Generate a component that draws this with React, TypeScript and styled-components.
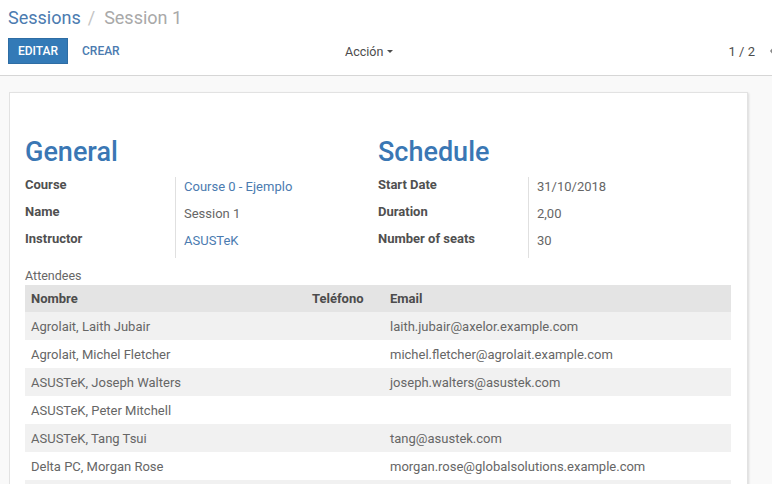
import React from "react";
import styled, { createGlobalStyle } from "styled-components";

const GlobalStyle = createGlobalStyle`
  html, body { margin: 0; padding: 0; }
  body {
    font-family: Roboto, "Noto Sans", "Liberation Sans", sans-serif;
    background: #f9f9f9;
    overflow: hidden;
    width: 772px;
    height: 484px;
    color: #4c4c4c;
  }
`;

const Page = styled.div`
  width: 772px;
  height: 484px;
  overflow: hidden;
  display: flex;
  flex-direction: column;
`;

const ControlPanel = styled.div`
  background: #fff;
  border-bottom: 1px solid #d6d6d6;
  padding: 7px 0 11px 8px;
`;

const Breadcrumb = styled.div`
  font-size: 18px;
  line-height: 22px;
  white-space: nowrap;
`;

const Crumb = styled.span<{ $active?: boolean }>`
  color: ${(p) => (p.$active ? "#a9a9a9" : "#4b7bb0")};
`;

const Sep = styled.span`
  color: #c4c4c4;
  margin: 0 9px 0 7px;
`;

const Toolbar = styled.div`
  margin-top: 9px;
  display: flex;
  align-items: center;
  height: 26px;
  white-space: nowrap;
`;

const LeftButtons = styled.div`
  display: flex;
  align-items: center;
  width: 337px;
  flex: none;
`;

const PrimaryButton = styled.button`
  height: 26px;
  width: 60px;
  padding: 0;
  background: #337ab7;
  border: 1px solid #2e6da4;
  color: #fff;
  font: 500 12px Roboto, "Liberation Sans", sans-serif;
  border-radius: 0;
`;

const LinkButton = styled.button`
  height: 26px;
  padding: 0 0 0 14px;
  background: transparent;
  border: none;
  color: #4b7bb0;
  font: 500 12px Roboto, "Liberation Sans", sans-serif;
`;

const Dropdown = styled.div`
  font-size: 12.5px;
  color: #4c4c4c;
  display: flex;
  align-items: center;
  gap: 4px;
`;

const Caret = styled.span`
  width: 0;
  height: 0;
  border-left: 3.5px solid transparent;
  border-right: 3.5px solid transparent;
  border-top: 3.5px solid #4c4c4c;
`;

const Pager = styled.div`
  margin-left: auto;
  margin-right: -5px;
  display: flex;
  align-items: center;
  font-size: 13px;
  color: #4c4c4c;
  flex: none;
`;

const PagerArrows = styled.div`
  display: flex;
  align-items: center;
  margin-left: 14px;
  color: #666;
  width: 8px;
  overflow: visible;
`;

const Content = styled.div`
  flex: 1;
  padding: 16px 24px 0 9px;
  overflow: hidden;
`;

const Sheet = styled.div`
  background: #fff;
  border: 1px solid #e2e2e2;
  box-shadow: 2px 0 2px -1px rgba(0, 0, 0, 0.12);
  padding: 45px 16px 0 15px;
  min-height: 500px;
`;

const Groups = styled.div`
  display: grid;
  grid-template-columns: 1fr 1fr;
`;

const Group = styled.div``;

const GroupTitle = styled.h1`
  margin: 0 0 10px;
  font-size: 27px;
  line-height: 29px;
  font-weight: 500;
  color: #3a77b4;
`;

const FieldRow = styled.div`
  display: grid;
  grid-template-columns: 150px 1fr;
  min-height: 27px;
`;

const Label = styled.div`
  font-size: 13px;
  line-height: 16px;
  font-weight: 700;
  color: #505050;
`;

const Value = styled.div<{ $link?: boolean }>`
  border-left: 1px solid #e0e0e0;
  padding: 2px 0 0 8px;
  font-size: 13px;
  line-height: 16px;
  color: ${(p) => (p.$link ? "#4b7bb0" : "#666")};
`;

const SubLabel = styled.div`
  margin-top: 10px;
  font-size: 12.5px;
  line-height: 16px;
  color: #666;
`;

const Table = styled.table`
  margin-top: 1px;
  width: 100%;
  border-collapse: collapse;
  font-size: 13px;
`;

const Th = styled.th<{ $w?: number }>`
  height: 27px;
  padding: 0 6px;
  text-align: left;
  font-weight: 700;
  color: #4c4c4c;
  background: #e4e4e4;
  width: ${(p) => (p.$w ? `${p.$w}px` : "auto")};
  box-sizing: border-box;
`;

const Tr = styled.tr`
  height: 28px;
  &:nth-child(odd) {
    background: #f1f1f1;
  }
`;

const Td = styled.td`
  padding: 0 6px;
  color: #666;
  white-space: nowrap;
`;

const attendees = [
  ["Agrolait, Laith Jubair", "", "laith.jubair@axelor.example.com"],
  ["Agrolait, Michel Fletcher", "", "michel.fletcher@agrolait.example.com"],
  ["ASUSTeK, Joseph Walters", "", "joseph.walters@asustek.com"],
  ["ASUSTeK, Peter Mitchell", "", ""],
  ["ASUSTeK, Tang Tsui", "", "tang@asustek.com"],
  ["Delta PC, Morgan Rose", "", "morgan.rose@globalsolutions.example.com"],
  ["", "", ""],
];

export default function App() {
  return (
    <Page>
      <GlobalStyle />
      <ControlPanel>
        <Breadcrumb>
          <Crumb>Sessions</Crumb>
          <Sep>/</Sep>
          <Crumb $active>Session 1</Crumb>
        </Breadcrumb>
        <Toolbar>
          <LeftButtons>
            <PrimaryButton>EDITAR</PrimaryButton>
            <LinkButton>CREAR</LinkButton>
          </LeftButtons>
          <Dropdown>
            Acción <Caret />
          </Dropdown>
          <Pager>
            1 / 2
            <PagerArrows>
              <svg width="8" height="12" viewBox="0 0 8 12" style={{ flex: "none" }}>
                <path d="M6 1 L2 6 L6 11" stroke="#888" strokeWidth="1.6" fill="none" />
              </svg>
            </PagerArrows>
          </Pager>
        </Toolbar>
      </ControlPanel>
      <Content>
        <Sheet>
          <Groups>
            <Group>
              <GroupTitle>General</GroupTitle>
              <FieldRow>
                <Label>Course</Label>
                <Value $link>Course 0 - Ejemplo</Value>
              </FieldRow>
              <FieldRow>
                <Label>Name</Label>
                <Value>Session 1</Value>
              </FieldRow>
              <FieldRow>
                <Label>Instructor</Label>
                <Value $link>ASUSTeK</Value>
              </FieldRow>
            </Group>
            <Group>
              <GroupTitle>Schedule</GroupTitle>
              <FieldRow>
                <Label>Start Date</Label>
                <Value>31/10/2018</Value>
              </FieldRow>
              <FieldRow>
                <Label>Duration</Label>
                <Value>2,00</Value>
              </FieldRow>
              <FieldRow>
                <Label>Number of seats</Label>
                <Value>30</Value>
              </FieldRow>
            </Group>
          </Groups>
          <SubLabel>Attendees</SubLabel>
          <Table>
            <thead>
              <tr>
                <Th $w={281}>Nombre</Th>
                <Th $w={78}>Teléfono</Th>
                <Th>Email</Th>
              </tr>
            </thead>
            <tbody>
              {attendees.map((a, i) => (
                <Tr key={i}>
                  <Td>{a[0]}</Td>
                  <Td>{a[1]}</Td>
                  <Td>{a[2]}</Td>
                </Tr>
              ))}
            </tbody>
          </Table>
        </Sheet>
      </Content>
    </Page>
  );
}
